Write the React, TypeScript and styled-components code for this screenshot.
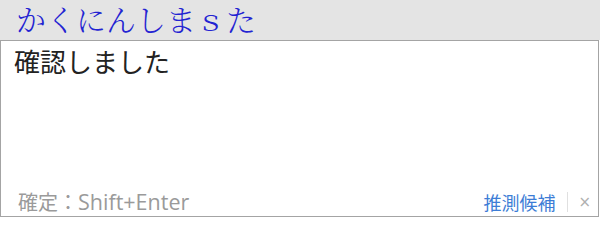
import React from "react";
import styled, { createGlobalStyle } from "styled-components";

const GlobalStyle = createGlobalStyle`
  html, body {
    margin: 0;
    padding: 0;
    background: #fff;
  }
  body {
    font-family: "Noto Sans CJK JP", "Noto Sans", sans-serif;
  }
`;

const Page = styled.div`
  width: 600px;
  display: flex;
  flex-direction: column;
`;

const Composition = styled.div`
  height: 40px;
  box-sizing: border-box;
  background: #e4e4e4;
  padding: 0 0 4px 16px;
  display: flex;
  align-items: center;
  color: #2323d2;
  font-family: "Noto Serif CJK JP", "Noto Sans CJK JP", serif;
  font-weight: 300;
  font-size: 30px;
  line-height: 36px;
  white-space: nowrap;
`;

const Editor = styled.div`
  width: 599px;
  height: 177px;
  box-sizing: border-box;
  border: 1px solid #a4a4a4;
  background: #fff;
  display: flex;
  flex-direction: column;
`;

const Text = styled.div`
  flex: 1;
  padding: 2px 13px 0;
  font-size: 26px;
  line-height: 36px;
  color: #222;
`;

const Footer = styled.div`
  display: flex;
  align-items: center;
  justify-content: space-between;
  height: 30px;
  box-sizing: border-box;
  padding: 2px 7px 0 17px;
  font-size: 18px;
`;

const Hint = styled.span`
  color: #9a9a9a;
  font-size: 20px;
  line-height: 28px;
`;

const Key = styled.span`
  font-family: "Open Sans", "Noto Sans", sans-serif;
  font-size: 21.5px;
`;

const Actions = styled.div`
  display: flex;
  align-items: center;
  gap: 8px;
`;

const Link = styled.span`
  color: #3d7dd6;
  cursor: pointer;
`;

const Divider = styled.span`
  width: 1px;
  height: 20px;
  background: #e0e0e0;
  margin: 0 2px 0 4px;
`;

const Close = styled.span`
  color: #b0b0b0;
  font-size: 15px;
  font-family: "DejaVu Sans", sans-serif;
  cursor: pointer;
`;

export default function App() {
  return (
    <>
      <GlobalStyle />
      <Page>
        <Composition>かくにんしまｓた</Composition>
        <Editor>
          <Text>確認しました</Text>
          <Footer>
            <Hint>
              確定：<Key>Shift+Enter</Key>
            </Hint>
            <Actions>
              <Link>推測候補</Link>
              <Divider />
              <Close>×</Close>
            </Actions>
          </Footer>
        </Editor>
      </Page>
    </>
  );
}
